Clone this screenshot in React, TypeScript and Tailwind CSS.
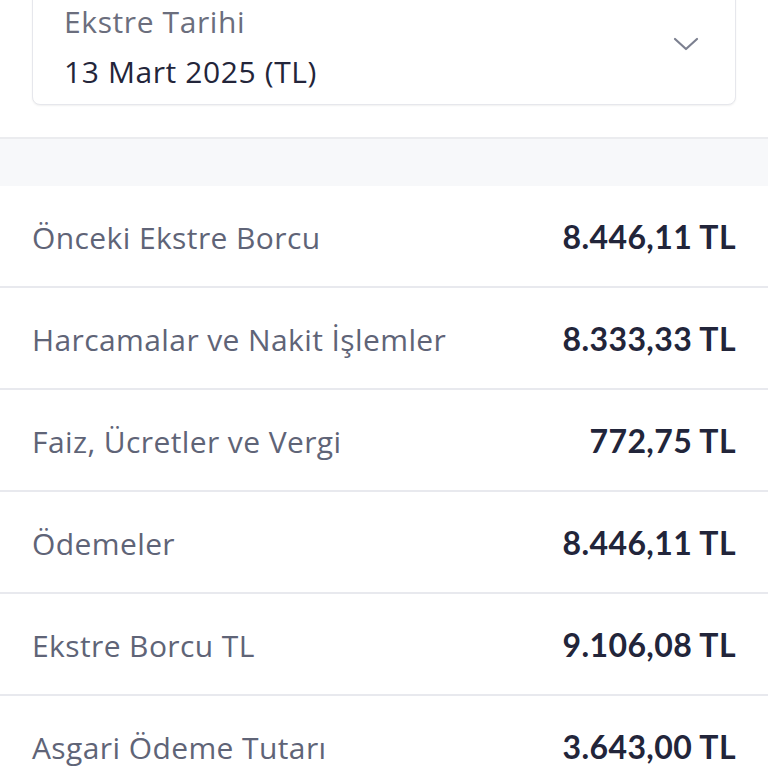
import React from "react";

const rows: [string, string][] = [
  ["Önceki Ekstre Borcu", "8.446,11 TL"],
  ["Harcamalar ve Nakit İşlemler", "8.333,33 TL"],
  ["Faiz, Ücretler ve Vergi", "772,75 TL"],
  ["Ödemeler", "8.446,11 TL"],
  ["Ekstre Borcu TL", "9.106,08 TL"],
  ["Asgari Ödeme Tutarı", "3.643,00 TL"],
];

export default function App() {
  return (
    <div className="w-[768px] h-[768px] overflow-hidden bg-white font-['Open_Sans',sans-serif] flex flex-col">
      <div className="h-[137px] shrink-0 px-[32px] flex flex-col">
        <div className="-mt-[20px] h-[125px] shrink-0 rounded-[8px] border border-[#e6e7ec] bg-white shadow-[0_1px_2px_rgba(0,0,0,0.06)] flex items-center justify-between pl-[31px] pr-[36px] pt-[10px]">
          <div className="flex flex-col tracking-[0.6px]">
            <span className="text-[30px] leading-[48px] text-[#6b6e7d]">Ekstre Tarihi</span>
            <span className="text-[30px] leading-[52px] text-[#23253a]">13 Mart 2025 (TL)</span>
          </div>
          <svg width="26" height="16" viewBox="0 0 26 16" className="mt-[-8px]">
            <path d="M2 3 L13 13 L24 3" fill="none" stroke="#7c8090" strokeWidth="2.2" strokeLinecap="round" strokeLinejoin="round" />
          </svg>
        </div>
      </div>
      <div className="h-[49px] shrink-0 border-t-2 border-[#ebecef] bg-[#f7f8fa]" />
      <div className="flex flex-col">
        {rows.map(([l, v], i) => (
          <div
            key={i}
            className="h-[102px] shrink-0 flex items-center justify-between px-[32px] pt-[2px] border-b-2 border-[#e8e9ee]"
          >
            <span className="text-[30px] tracking-[0.4px] text-[#5f6477]">{l}</span>
            <span className="text-[32px] font-bold tracking-[0.4px] tabular-nums font-['Lato',sans-serif] text-[#22253a]">{v}</span>
          </div>
        ))}
      </div>
    </div>
  );
}
